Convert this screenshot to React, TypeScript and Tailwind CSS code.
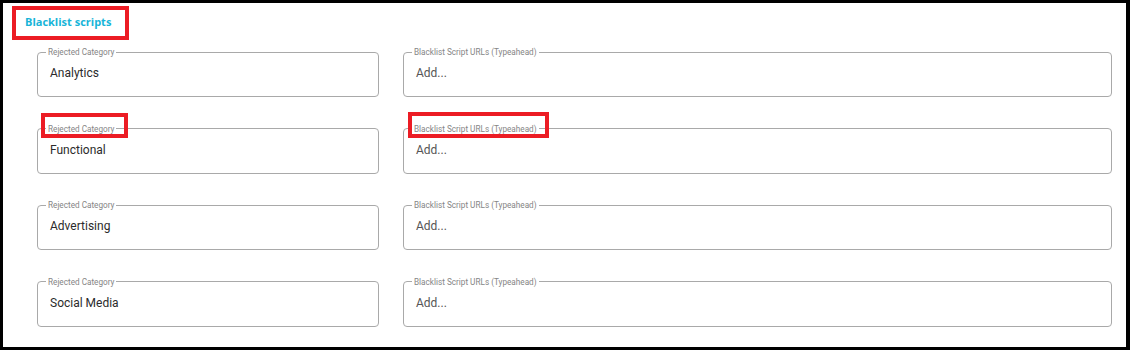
import React from "react";

const rows = ["Analytics", "Functional", "Advertising", "Social Media"];

function Field({ label, value, muted }: { label: string; value: string; muted?: boolean }) {
  return (
    <fieldset className="h-[50px] border border-[#a9a9a9] rounded-[4px] px-[12px] min-w-0">
      <legend className="ml-[-4px] px-[2px] text-[8.2px] leading-[10px] text-[#858585] [font-family:Roboto,'Liberation_Sans',sans-serif]">
        {label}
      </legend>
      <div
        className={
          "pt-[9px] text-[12px] leading-[14px] [font-family:Roboto,'Liberation_Sans',sans-serif] " +
          (muted ? "text-[#555]" : "text-[#2b2b2b]")
        }
      >
        {value}
      </div>
    </fieldset>
  );
}

export default function App() {
  return (
    <div className="relative w-[1130px] h-[350px] bg-white border-black border-t-[3px] border-l-[3px] border-r-[4px] border-b-[3px] overflow-hidden">
      <div className="pl-[22px] pt-[11px] text-[11px] leading-[15px] font-bold text-[#17b4d8] [font-family:'Open_Sans',sans-serif]">
        Blacklist scripts
      </div>
      <div className="mt-[18px] pl-[34px] pr-[14px] flex flex-col gap-[26.5px]">
        {rows.map((r) => (
          <div key={r} className="flex gap-[24px]">
            <div className="w-[342px] shrink-0">
              <Field label="Rejected Category" value={r} />
            </div>
            <div className="flex-1 min-w-0">
              <Field label="Blacklist Script URLs (Typeahead)" value="Add..." muted />
            </div>
          </div>
        ))}
      </div>
      <div className="absolute left-[9px] top-[3px] w-[117px] h-[34px] border-[4px] border-[#ec1c24]" />
      <div className="absolute left-[38px] top-[110px] w-[87px] h-[25px] border-[4px] border-[#ec1c24]" />
      <div className="absolute left-[405px] top-[109px] w-[141px] h-[26px] border-[4px] border-[#ec1c24]" />
    </div>
  );
}
